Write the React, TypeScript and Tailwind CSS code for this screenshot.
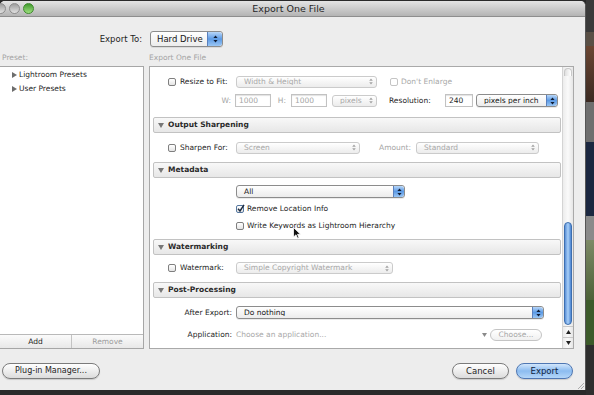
import clsx from 'clsx';

function Stepper({ blue, big }: { blue?: boolean; big?: boolean }) {
  if (blue) {
    return (
      <div
        className={clsx(
          'flex h-full items-center justify-center rounded-r-[3px] border-l border-[#5a80bd] bg-gradient-to-b from-[#b7d6f8] via-[#5c9ae4] to-[#9ac6f4]',
          big ? 'w-[15px]' : 'w-[11px]'
        )}
      >
        <svg width="5" height="8" viewBox="0 0 5 8">
          <path d="M2.5 0.4L4.6 3.1H0.4Z M2.5 7.6L4.6 4.9H0.4Z" fill="#0f1c33" />
        </svg>
      </div>
    );
  }
  return (
    <div className="flex h-full w-[11px] items-center justify-center">
      <svg width="4" height="7" viewBox="0 0 4 7">
        <path d="M2 0.4L3.8 2.7H0.2Z M2 6.6L3.8 4.3H0.2Z" fill="#a3a3a3" />
      </svg>
    </div>
  );
}

function Popup({
  text,
  className,
  blue,
  disabled,
  big,
}: {
  text: string;
  className: string;
  blue?: boolean;
  disabled?: boolean;
  big?: boolean;
}) {
  return (
    <div
      className={clsx(
        'flex shrink-0 items-center rounded-[3px] border bg-gradient-to-b from-white to-[#ececec]',
        disabled ? 'border-[#cbcbcb] text-[#a8a8a8]' : 'border-[#8c8c8c] text-[#151515] shadow-[0_1px_0_rgba(0,0,0,0.08)]',
        className
      )}
    >
      <span className={clsx('flex-1 truncate', big ? 'pl-[6px]' : 'pl-[7px]')}>{text}</span>
      <Stepper blue={blue} big={big} />
    </div>
  );
}

function Checkbox({ checked, disabled }: { checked?: boolean; disabled?: boolean }) {
  return (
    <div
      className={clsx(
        'relative h-[8px] w-[8px] shrink-0 rounded-[2px] border',
        disabled ? 'border-[#c4c4c4] bg-white' : 'border-[#7f7f7f] bg-gradient-to-b from-white to-[#e4e4e4]',
        checked && 'border-[#55779f] bg-gradient-to-b from-[#cfe1f4] to-[#8fb2da]'
      )}
    >
      {checked && (
        <svg className="absolute left-[0px] top-[-2px]" width="8" height="9" viewBox="0 0 8 9">
          <path d="M1 4.8L3 7L7 0.8" stroke="#1c2a3e" strokeWidth="1.4" fill="none" />
        </svg>
      )}
    </div>
  );
}

function Field({ text, className }: { text: string; className: string }) {
  return (
    <div
      className={clsx(
        'flex h-[13px] shrink-0 items-center border border-[#c2c2c2] bg-white pl-[3px] shadow-[inset_0_1px_1px_rgba(0,0,0,0.12)]',
        className
      )}
    >
      {text}
    </div>
  );
}

function Header({ title, className }: { title: string; className: string }) {
  return (
    <div
      className={clsx(
        'ml-[3px] mr-[1px] flex h-[16px] items-center rounded-[2px] border border-[#c2c2c2] bg-gradient-to-b from-[#f8f8f8] to-[#e7e7e7] pl-[4px] font-bold text-[#2a2a2a]',
        className
      )}
    >
      <svg width="6" height="5" viewBox="0 0 6 5">
        <path d="M0 0H6L3 5Z" fill="#777" />
      </svg>
      <span className="ml-[4px]">{title}</span>
    </div>
  );
}

export default function App() {
  return (
    <div className="flex h-[395px] w-[594px] overflow-hidden bg-[#2a2a2a] font-['DejaVu_Sans',sans-serif] text-[7.5px] leading-none text-[#1e1e1e]">
      <div className="relative mt-[1px] flex h-[389px] w-[586px] flex-col rounded-t-[5px] border-r border-[#555] bg-[#ededed]">
        {/* title bar */}
        <div className="relative flex h-[16px] shrink-0 items-center justify-center rounded-t-[5px] border-b border-[#8e8e8e] bg-gradient-to-b from-[#e4e4e4] to-[#b4b4b4]">
          <div className="absolute left-[-5px] top-[2px] flex gap-[3px]">
            <div className="h-[11px] w-[11px] rounded-full border border-[#8d8d8d] bg-gradient-to-b from-[#9d9d9d] to-[#e2e2e2]" />
            <div className="h-[11px] w-[11px] rounded-full border border-[#8d8d8d] bg-gradient-to-b from-[#9d9d9d] to-[#e2e2e2]" />
            <div className="h-[11px] w-[11px] rounded-full border border-[#3f8a2e] bg-gradient-to-b from-[#3f9a2c] to-[#9ee07f]" />
          </div>
          <span className="mr-[8px] text-[9.5px] text-[#262626]">Export One File</span>
        </div>

        {/* export to */}
        <div className="mt-[14px] flex h-[16px] items-center text-[8.5px]">
          <span className="w-[142px] text-right">Export To:</span>
          <Popup text="Hard Drive" className="ml-[8px] h-[16px] w-[73px]" blue big />
        </div>

        <div className="mt-[6px] flex h-[10px] items-center text-[#a4a4a4]">
          <span className="w-[149px] pl-[2px]">Preset:</span>
          <span>Export One File</span>
        </div>

        {/* panels */}
        <div className="mt-[3px] flex h-[283px]">
          <div className="flex w-[144px] flex-col border border-l-0 border-[#a6a6a6] bg-white">
            <div className="flex-1 pt-[1px]">
              <div className="flex h-[14px] items-center pl-[12px]">
                <svg width="5" height="6" viewBox="0 0 5 6">
                  <path d="M0 0L5 3L0 6Z" fill="#6d6d6d" />
                </svg>
                <span className="ml-[2px]">Lightroom Presets</span>
              </div>
              <div className="flex h-[14px] items-center pl-[12px]">
                <svg width="5" height="6" viewBox="0 0 5 6">
                  <path d="M0 0L5 3L0 6Z" fill="#6d6d6d" />
                </svg>
                <span className="ml-[2px]">User Presets</span>
              </div>
            </div>
            <div className="flex h-[14px] border-t border-[#b9b9b9] bg-gradient-to-b from-[#fbfbfb] to-[#e8e8e8]">
              <div className="flex w-[72px] items-center justify-center border-r border-[#c3c3c3]">Add</div>
              <div className="flex flex-1 items-center justify-center text-[#9c9c9c]">Remove</div>
            </div>
          </div>

          <div className="ml-[5px] flex w-[425px] border border-[#a9a9a9] bg-white">
            <div className="relative flex-1">
              {/* resize row */}
              <div className="mt-[8px] flex h-[13px] items-center">
                <div className="flex w-[86px] items-center pl-[18px]">
                  <Checkbox />
                  <span className="ml-[4px]">Resize to Fit:</span>
                </div>
                <Popup text="Width & Height" className="h-[12px] w-[141px]" disabled />
                <div className="ml-[13px]">
                  <Checkbox disabled />
                </div>
                <span className="ml-[3px] text-[#a8a8a8]">Don't Enlarge</span>
              </div>

              <div className="mt-[6px] flex h-[13px] items-center text-[#a5a5a5]">
                <span className="w-[81px] text-right">W:</span>
                <Field text="1000" className="ml-[4px] w-[36px]" />
                <span className="w-[20px] pr-[5px] text-right">H:</span>
                <Field text="1000" className="w-[36px]" />
                <Popup text="pixels" className="ml-[5px] h-[12px] w-[45px]" disabled />
                <span className="ml-[12px] w-[52px] text-[#1e1e1e]">Resolution:</span>
                <Field text="240" className="ml-[4px] w-[28px] border-[#9c9c9c] text-[#1e1e1e]" />
                <Popup text="pixels per inch" className="ml-[3px] h-[13px] w-[82px]" blue />
              </div>

              <Header title="Output Sharpening" className="mt-[10px]" />

              <div className="mt-[8px] flex h-[13px] items-center">
                <div className="flex w-[86px] items-center pl-[18px]">
                  <Checkbox />
                  <span className="ml-[4px]">Sharpen For:</span>
                </div>
                <Popup text="Screen" className="h-[12px] w-[124px]" disabled />
                <span className="ml-[19px] w-[37px] text-[#a5a5a5]">Amount:</span>
                <Popup text="Standard" className="h-[12px] w-[123px]" disabled />
              </div>

              <Header title="Metadata" className="mt-[8px]" />

              <div className="mt-[7px] flex h-[13px] items-center pl-[86px]">
                <Popup text="All" className="h-[13px] w-[169px]" blue />
              </div>
              <div className="mt-[5px] flex h-[12px] items-center pl-[86px]">
                <Checkbox checked />
                <span className="ml-[3px]">Remove Location Info</span>
              </div>
              <div className="mt-[5px] flex h-[12px] items-center pl-[86px]">
                <Checkbox />
                <span className="ml-[3px]">Write Keywords as Lightroom Hierarchy</span>
              </div>

              <Header title="Watermarking" className="mt-[7px]" />

              <div className="mt-[7px] flex h-[12px] items-center">
                <div className="flex w-[86px] items-center pl-[18px]">
                  <Checkbox />
                  <span className="ml-[4px]">Watermark:</span>
                </div>
                <Popup text="Simple Copyright Watermark" className="h-[12px] w-[157px]" disabled />
              </div>

              <Header title="Post-Processing" className="mt-[8px]" />

              <div className="mt-[8px] flex h-[13px] items-center">
                <span className="w-[82px] text-right">After Export:</span>
                <Popup text="Do nothing" className="ml-[4px] h-[13px] w-[308px]" blue />
              </div>
              <div className="mt-[10px] flex h-[12px] items-center">
                <span className="w-[82px] text-right">Application:</span>
                <span className="ml-[4px] flex-1 text-[#a8a8a8]">Choose an application...</span>
                <svg width="5" height="4" viewBox="0 0 5 4" className="mr-[3px]">
                  <path d="M0 0H5L2.5 4Z" fill="#8a8a8a" />
                </svg>
                <div className="mr-[20px] flex h-[12px] w-[52px] items-center justify-center rounded-full border border-[#c4c4c4] bg-gradient-to-b from-white to-[#f0f0f0] text-[#a6a6a6]">
                  Choose...
                </div>
              </div>

              {/* mouse pointer */}
              <svg className="absolute left-[143px] top-[160px]" width="8" height="12" viewBox="0 0 8 12">
                <path d="M0.5 0.5V10L3 7.8L4.6 11.3L6 10.7L4.5 7.3H7.5Z" fill="#111" stroke="#fff" strokeWidth="0.8" />
              </svg>
            </div>

            {/* scrollbar */}
            <div className="flex w-[11px] flex-col border-l border-[#d4d4d4] bg-gradient-to-r from-[#ececec] via-[#fafafa] to-[#e6e6e6]">
              <div className="mx-[1px] mt-[1px] h-[8px] rounded-t-full border border-b-0 border-[#c8c8c8] bg-gradient-to-r from-[#e0e0e0] to-white" />
              <div className="h-[146px]" />
              <div className="mx-[1px] h-[103px] rounded-full border border-[#3d6fb0] bg-gradient-to-r from-[#5b8fd6] via-[#a9d0f8] to-[#4b84d0]" />
              <div className="mt-[1px] flex h-[11px] items-center justify-center border-t border-[#c8c8c8]">
                <svg width="5" height="4" viewBox="0 0 5 4">
                  <path d="M2.5 0L5 4H0Z" fill="#222" />
                </svg>
              </div>
              <div className="flex h-[11px] items-center justify-center border-t border-[#c8c8c8]">
                <svg width="5" height="4" viewBox="0 0 5 4">
                  <path d="M0 0H5L2.5 4Z" fill="#222" />
                </svg>
              </div>
            </div>
          </div>
        </div>

        {/* bottom buttons */}
        <div className="mt-[14px] flex h-[16px] items-center text-[8px]">
          <div className="ml-[2px] flex h-[16px] w-[98px] items-center justify-center rounded-full border border-[#7b7b7b] bg-gradient-to-b from-white to-[#dcdcdc] shadow-[0_1px_1px_rgba(0,0,0,0.15)]">
            Plug-in Manager...
          </div>
          <div className="ml-auto flex h-[16px] w-[57px] items-center justify-center rounded-full border border-[#7b7b7b] bg-gradient-to-b from-white to-[#dcdcdc] text-[8.5px] shadow-[0_1px_1px_rgba(0,0,0,0.15)]">
            Cancel
          </div>
          <div className="ml-[7px] mr-[12px] flex h-[16px] w-[57px] items-center justify-center rounded-full border border-[#4f77b3] bg-gradient-to-b from-[#d2e6fb] via-[#8cbcf0] to-[#b4d6f8] text-[8.5px] text-[#0f2442] shadow-[0_1px_1px_rgba(0,0,0,0.15)]">
            Export
          </div>
        </div>

        {/* resize grip */}
        <svg className="absolute bottom-[1px] right-[1px]" width="7" height="7" viewBox="0 0 7 7">
          <path d="M7 1L1 7M7 4L4 7" stroke="#9a9a9a" strokeWidth="0.8" />
        </svg>
      </div>

      {/* desktop behind */}
      <div className="flex flex-1 flex-col">
        <div className="h-[32px] bg-[#3a3a3a]" />
        <div className="h-[14px] bg-[#5a5046]" />
        <div className="h-[56px] bg-gradient-to-b from-[#6b4632] to-[#3b2a22]" />
        <div className="h-[40px] bg-[#6e6e6e]" />
        <div className="h-[74px] bg-[#1b2740]" />
        <div className="h-[24px] bg-[#8a8a8a]" />
        <div className="h-[60px] bg-gradient-to-b from-[#7d8a66] to-[#4d6238]" />
        <div className="h-[45px] bg-[#3c5a2a]" />
        <div className="flex-1 bg-[#2e2e2e]" />
      </div>
    </div>
  );
}
